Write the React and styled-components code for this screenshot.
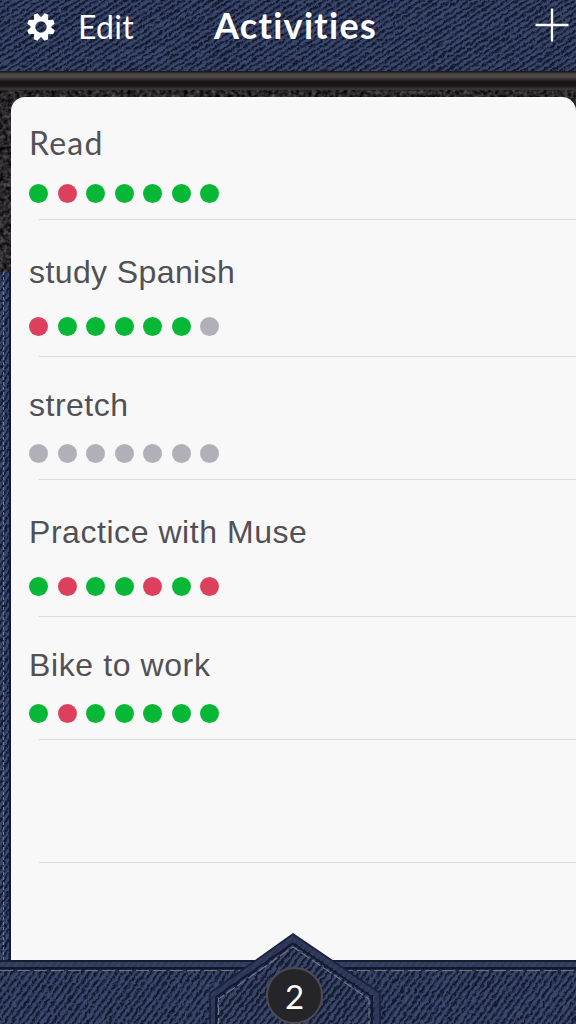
import React from "react";
import styled, { createGlobalStyle } from "styled-components";

const GREEN = "#06b835";
const RED = "#dc405c";
const GRAY = "#b1b0b9";

const colors = { g: GREEN, r: RED, n: GRAY };

const activities = [
  { name: "Read", days: "grggggg", height: 123, top: 27, bottom: 17, font: "Lato", spacing: 1.2 },
  { name: "study Spanish", days: "rgggggn", height: 137, top: 33, bottom: 21, spacing: 0.4 },
  { name: "stretch", days: "nnnnnnn", height: 123, top: 29, bottom: 17 },
  { name: "Practice with Muse", days: "grggrgr", height: 137, top: 33, bottom: 21, spacing: 0.55 },
  { name: "Bike to work", days: "grggggg", height: 123, top: 29, bottom: 17, spacing: 0.6 },
  { name: "", days: "", height: 123, top: 29, bottom: 17 },
];

const Denim = ({ id, angle, seed = 2, gap = 5.2 }) => (
  <Fabric aria-hidden="true">
    <defs>
      <pattern
        id={`${id}-twill`}
        width="200"
        height={gap}
        patternUnits="userSpaceOnUse"
        patternTransform={`rotate(${angle})`}
      >
        <rect width="200" height={gap} fill="#303d61" />
        <rect width="200" height={gap * 0.42} fill="#10162c" />
        <rect y={gap * 0.62} width="200" height="1" fill="#3f4d70" />
      </pattern>
      <filter id={`${id}-warp`} x="0" y="0" width="100%" height="100%" colorInterpolationFilters="sRGB">
        <feTurbulence type="fractalNoise" baseFrequency="0.2" numOctaves="2" seed={seed} result="n" />
        <feDisplacementMap in="SourceGraphic" in2="n" scale="4" xChannelSelector="R" yChannelSelector="G" />
      </filter>
      <filter id={`${id}-grain`} x="0" y="0" width="100%" height="100%" colorInterpolationFilters="sRGB">
        <feTurbulence type="fractalNoise" baseFrequency="0.4 0.3" numOctaves="2" seed={seed + 4} />
        <feColorMatrix values="0 0 0 0 0.25  0 0 0 0 0.3  0 0 0 0 0.43  2.4 0 0 0 -1.12" />
      </filter>
    </defs>
    <rect width="100%" height="100%" fill="#222b48" />
    <rect x="-10" y="-10" width="620" height="720" fill={`url(#${id}-twill)`} filter={`url(#${id}-warp)`} />
    <rect width="100%" height="100%" filter={`url(#${id}-grain)`} />
  </Fabric>
);

const Leather = () => (
  <Fabric aria-hidden="true">
    <filter id="leather" x="0" y="0" width="100%" height="100%" colorInterpolationFilters="sRGB">
      <feTurbulence type="fractalNoise" baseFrequency="0.25" numOctaves="2" seed="8" />
      <feColorMatrix values="0.5 0 0 0 -0.09  0.5 0 0 0 -0.097  0.5 0 0 0 -0.09  0 0 0 0 1" />
    </filter>
    <rect width="100%" height="100%" filter="url(#leather)" />
  </Fabric>
);

const Gear = () => (
  <GearIcon viewBox="-14 -14 28 28">
    {[0, 45, 90, 135, 180, 225, 270, 315].map((a) => (
      <path key={a} d="M-4.200 -7.500 L-2 -14 H2 L4.200 -7.500 Z" fill="#fff" transform={`rotate(${a + 22.5})`} />
    ))}
    <circle r="8" fill="none" stroke="#fff" strokeWidth="4.600" />
  </GearIcon>
);

const Pocket = () => (
  <PocketShape viewBox="0 0 176 92">
    <defs>
      <clipPath id="pocket">
        <path d="M86 1 L173 60 V92 H3 V60 Z" />
      </clipPath>
      <pattern id="pocket-twill" width="40" height="5.4" patternUnits="userSpaceOnUse" patternTransform="rotate(-52)">
        <rect width="40" height="5.4" fill="#3b4768" />
        <rect width="40" height="2.4" fill="#141a30" />
      </pattern>
      <filter id="pocket-warp" x="0" y="0" width="100%" height="100%" colorInterpolationFilters="sRGB">
        <feTurbulence type="fractalNoise" baseFrequency="0.2" numOctaves="2" seed="5" result="n" />
        <feDisplacementMap in="SourceGraphic" in2="n" scale="4" xChannelSelector="R" yChannelSelector="G" />
      </filter>
    </defs>
    <g clipPath="url(#pocket)">
      <rect width="176" height="92" fill="#2a3455" />
      <rect x="-5" y="-5" width="190" height="105" fill="url(#pocket-twill)" filter="url(#pocket-warp)" />
      <path d="M6 95 V61 L86 5 L170 61 V95" fill="none" stroke="#303a5a" strokeWidth="6.500" strokeOpacity="0.8" />
      <path d="M9 95 V64 L86 10.500 L165 64 V95" fill="none" stroke="#131931" strokeWidth="2" />
      <path d="M11.500 95 V66 L86 14 L162 66 V95" fill="none" stroke="#70788c" strokeWidth="1.100" strokeDasharray="10 3" />
    </g>
    <path d="M3 92 V60 L86 1 L173 60 V92" fill="none" stroke="#1a213b" strokeWidth="1.600" />
  </PocketShape>
);

const App = () => {
  return (
    <Screen>
      <GlobalStyle />
      <TopBar>
        <Denim id="top" angle={-33} />
        <Tools>
          <Gear />
          <EditButton>Edit</EditButton>
        </Tools>
        <Title>Activities</Title>
        <PlusIcon viewBox="0 0 34 34">
          <path d="M17 0.500V33.500M0.500 17H33.500" stroke="#fff" strokeWidth="2.300" />
        </PlusIcon>
      </TopBar>
      <Body>
        <Leather />
        <Piping />
        <Content>
          <Side>
            <Denim id="side" angle={-58} seed={9} gap={5} />
            <Seam />
          </Side>
          <Panel>
            {activities.map((item, i) => (
              <Row key={i} $height={item.height} $top={item.top} $bottom={item.bottom}>
                <Name $font={item.font} $spacing={item.spacing}>{item.name}</Name>
                <Dots>
                  {item.days.split("").map((day, j) => (
                    <Dot key={j} $color={colors[day]} />
                  ))}
                </Dots>
              </Row>
            ))}
          </Panel>
        </Content>
      </Body>
      <BottomBar>
        <Denim id="bottom" angle={-54} seed={6} gap={5.6} />
        <Hem />
        <Stitch />
        <PocketButton>
          <Pocket />
          <Badge>2</Badge>
        </PocketButton>
      </BottomBar>
    </Screen>
  );
};

export default App;

const GlobalStyle = createGlobalStyle`
  * {
    box-sizing: border-box;
  }
  body {
    margin: 0;
    overflow: hidden;
  }
`;
const Screen = styled.div`
  width: 576px;
  height: 1024px;
  display: flex;
  flex-direction: column;
  overflow: hidden;
  background-color: #17171c;
`;
const Fabric = styled.svg`
  position: absolute;
  inset: 0;
  width: 100%;
  height: 100%;
  z-index: -1;
`;
const TopBar = styled.header`
  position: relative;
  isolation: isolate;
  overflow: hidden;
  height: 71px;
  flex: none;
  display: grid;
  grid-template-columns: 187px 1fr 34px;
  align-items: start;
  padding: 0 7px 0 27px;
  color: #fff;
  font-family: Lato, sans-serif;
`;
const Tools = styled.div`
  display: flex;
  align-items: flex-start;
  gap: 23px;
`;
const GearIcon = styled.svg`
  width: 28px;
  height: 28px;
  margin-top: 13px;
`;
const EditButton = styled.span`
  font-size: 32px;
  line-height: 40px;
  margin-top: 7px;
  letter-spacing: 0.3px;
`;
const Title = styled.h1`
  margin: 4px 0 0;
  font-size: 36px;
  line-height: 42px;
  font-weight: 700;
  letter-spacing: 1.3px;
`;
const PlusIcon = styled.svg`
  width: 34px;
  height: 34px;
  margin-top: 8px;
`;
const Body = styled.div`
  position: relative;
  isolation: isolate;
  height: 889px;
  flex: none;
`;
const Piping = styled.div`
  height: 19px;
  margin-bottom: 7px;
  background: linear-gradient(
    #141216 0,
    #4a4645 3px,
    #504b4a 6px,
    #353130 8px,
    #171214 11px,
    #1b1617 15px,
    #3d3835 18px,
    #35302e 19px
  );
`;
const Content = styled.div`
  display: flex;
  height: 863px;
`;
const Side = styled.div`
  position: relative;
  isolation: isolate;
  overflow: hidden;
  width: 10.5px;
  flex: none;
  height: 688px;
  margin-top: 175px;
`;
const Seam = styled.div`
  height: 100%;
  margin-left: 3px;
  border-left: 1px dashed #737d95;
  border-right: 2px solid #131a31;
`;
const Panel = styled.main`
  flex: 1;
  background-color: #f8f8f9;
  border-radius: 14px 14px 0 0;
`;
const Row = styled.section`
  display: flex;
  flex-direction: column;
  justify-content: space-between;
  align-items: flex-start;
  height: ${(props) => props.$height}px;
  padding: ${(props) => props.$top}px 0 ${(props) => props.$bottom}px 18.5px;
  background: linear-gradient(#dcdcde, #dcdcde) 100% 100% / calc(100% - 28px) 1px no-repeat;
`;
const Name = styled.div`
  font-family: ${(props) => props.$font || "Liberation Sans"}, sans-serif;
  font-size: 32px;
  line-height: 38px;
  letter-spacing: ${(props) => props.$spacing || 0.5}px;
  color: #515155;
`;
const Dots = styled.div`
  display: flex;
  gap: 9.5px;
`;
const Dot = styled.span`
  width: 19px;
  height: 19px;
  border-radius: 50%;
  background-color: ${(props) => props.$color};
`;
const BottomBar = styled.footer`
  position: relative;
  isolation: isolate;
  height: 64px;
  flex: none;
`;
const Hem = styled.div`
  height: 10px;
  background: linear-gradient(#171d35 0 1.5px, #353f60cc 2px 6.5px, #11172c 7px 9px, #202b4b00 10px);
`;
const Stitch = styled.div`
  height: 1px;
  background: repeating-linear-gradient(90deg, #6d7484 0 13px, #262f49 13px 17px);
`;
/* the pocket flap sticks out over the list */
const PocketButton = styled.div`
  position: absolute;
  left: 207px;
  top: -27px;
  width: 176px;
  height: 92px;
  display: grid;
`;
const PocketShape = styled.svg`
  grid-area: 1 / 1;
  width: 176px;
  height: 92px;
`;
const Badge = styled.div`
  grid-area: 1 / 1;
  width: 57px;
  height: 57px;
  margin: 34px 0 0 59px;
  border-radius: 50%;
  border: 2px solid #4c4b50;
  background-color: #252428;
  color: #fff;
  font-family: Lato, sans-serif;
  font-size: 33px;
  line-height: 54px;
  text-align: center;
`;
